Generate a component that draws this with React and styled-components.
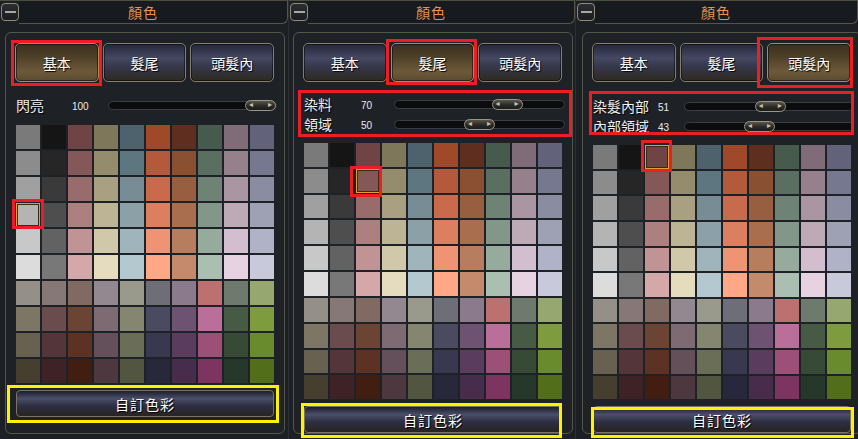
import React from 'react';
import styled, { createGlobalStyle } from 'styled-components';

const GlobalStyle = createGlobalStyle`
  html, body {
    margin: 0;
    padding: 0;
    background: #1b1e23;
  }
  body {
    font-family: "Noto Sans CJK TC", "Noto Sans CJK SC", sans-serif;
    color: #f2f2f2;
  }
`;

const PALETTE = [
  ['#7a7a7a', '#151515', '#6e4444', '#7e775a', '#4d626c', '#a0482a', '#5e2e1e', '#465a4e', '#806c78', '#62637a'],
  ['#8c8c8c', '#262626', '#845858', '#948c6c', '#5e7680', '#b45a3c', '#8a5032', '#5a6e62', '#96808c', '#767890'],
  ['#a0a0a0', '#3a3a3a', '#986c6a', '#a8a080', '#788c96', '#c86a4c', '#985e40', '#6e8276', '#aa96a2', '#8a8ca2'],
  ['#b4b4b4', '#4e4e4e', '#ac807e', '#bcb494', '#8ca0a8', '#dc7e60', '#a86e4e', '#82968a', '#beaab6', '#9ea0b4'],
  ['#c8c8c8', '#626262', '#c09494', '#d0c8a8', '#a0b4bc', '#ee9474', '#b67e5e', '#96aa9e', '#d2bece', '#b0b2c8'],
  ['#dcdcdc', '#787878', '#d4a8a8', '#e4dcbc', '#b4c8d0', '#ffa888', '#c48a6c', '#aabeb2', '#e6d2e0', '#c8cadc'],
  ['#949088', '#867876', '#806a62', '#948890', '#9a9a8c', '#6e6e78', '#8a7a8c', '#bc7070', '#6e7a6e', '#96a870'],
  ['#7e7664', '#6a4c4e', '#6c4434', '#7e6a72', '#848670', '#4a4a60', '#6e5272', '#ba6e9a', '#465a46', '#7e9c3e'],
  ['#686050', '#54363a', '#5c3224', '#645058', '#6a6e56', '#383850', '#5a3c5e', '#9c5078', '#364a36', '#6a8a2e'],
  ['#463e2e', '#3e2226', '#421e12', '#4e3840', '#525640', '#28283c', '#482c4c', '#7e3460', '#26382a', '#526e1a'],
];

const TABS = ['基本', '髮尾', '頭髮內'];

const PANELS = [
  {
    width: 288,
    inset: 5,
    active: 0,
    labelWidth: 56,
    valueWidth: 36,
    slidersTop: 13,
    gridTop: 10,
    sliders: [{ label: '閃亮', value: 100 }],
    selected: [3, 0],
    marks: [
      { x: 11, y: 40, w: 91, h: 46, c: 'red' },
      { x: 12, y: 199, w: 32, h: 30, c: 'red' },
      { x: 7, y: 385, w: 272, h: 38, c: 'yellow' },
    ],
  },
  {
    width: 287,
    inset: 4,
    active: 1,
    labelWidth: 57,
    valueWidth: 33,
    slidersTop: 12,
    gridTop: 9,
    sliders: [
      { label: '染料', value: 70 },
      { label: '領域', value: 50 },
    ],
    selected: [1, 2],
    marks: [
      { x: 97, y: 39, w: 91, h: 46, c: 'red' },
      { x: 9, y: 90, w: 274, h: 47, c: 'red' },
      { x: 61, y: 166, w: 32, h: 31, c: 'red' },
      { x: 12, y: 403, w: 261, h: 35, c: 'yellow' },
    ],
  },
  {
    width: 283,
    inset: 6,
    active: 2,
    labelWidth: 65,
    valueWidth: 26,
    slidersTop: 14,
    gridTop: 9,
    sliders: [
      { label: '染髮內部', value: 51 },
      { label: '內部領域', value: 43 },
    ],
    selected: [0, 2],
    marks: [
      { x: 181, y: 37, w: 96, h: 51, c: 'red' },
      { x: 13, y: 91, w: 265, h: 44, c: 'red' },
      { x: 65, y: 140, w: 31, h: 32, c: 'red' },
      { x: 15, y: 407, w: 263, h: 31, c: 'yellow' },
    ],
  },
];

export default function App() {
  return (
    <>
      <GlobalStyle />
      <Screen>
        {PANELS.map((p, i) => (
          <ColorPanel key={i} {...p} />
        ))}
      </Screen>
    </>
  );
}

function ColorPanel({
  width,
  inset,
  active,
  labelWidth,
  valueWidth,
  slidersTop,
  gridTop,
  sliders,
  selected,
  marks,
}) {
  return (
    <PanelWrap $width={width}>
      <TitleBar>
        <MinusButton>
          <span />
        </MinusButton>
        <TitleArea>顏色</TitleArea>
      </TitleBar>

      <Frame $inset={inset}>
        <TabRow>
          {TABS.map((t, i) => (
            <Tab key={t} $active={i === active}>
              {t}
            </Tab>
          ))}
        </TabRow>

        <Sliders $top={slidersTop}>
          {sliders.map((s) => (
            <SliderRow key={s.label}>
              <SliderLabel $w={labelWidth}>{s.label}</SliderLabel>
              <SliderValue $w={valueWidth}>{s.value}</SliderValue>
              <Track>
                <Thumb style={{ left: `calc((100% - 31px) * ${s.value / 100})` }}>
                  <i>◂</i>
                  <i>▸</i>
                </Thumb>
              </Track>
            </SliderRow>
          ))}
        </Sliders>

        <Swatches $top={gridTop}>
          {PALETTE.map((row, r) =>
            row.map((c, k) => (
              <Swatch
                key={`${r}-${k}`}
                $color={c}
                $picked={selected[0] === r && selected[1] === k}
              />
            ))
          )}
        </Swatches>

        <CustomButton>自訂色彩</CustomButton>
      </Frame>

      {marks.map((m, i) => (
        <Mark
          key={i}
          $color={m.c === 'red' ? '#ee1c24' : '#fff200'}
          style={{ left: m.x, top: m.y, width: m.w, height: m.h }}
        />
      ))}
    </PanelWrap>
  );
}

const Screen = styled.div`
  display: flex;
  width: 858px;
  height: 439px;
  overflow: hidden;
  background: #1b1e23;
`;

const PanelWrap = styled.div`
  position: relative;
  flex: 0 0 ${(p) => p.$width}px;
  width: ${(p) => p.$width}px;
  height: 439px;
  overflow: hidden;
  background: #1c1f24;
  border-left: 1px solid #2c2f33;
  box-sizing: border-box;
  &:first-child {
    border-left: none;
  }
`;

const TitleBar = styled.div`
  display: flex;
  height: 24px;
  border-top: 1px solid #4e4e40;
  box-sizing: border-box;
`;

const MinusButton = styled.div`
  flex: 0 0 18px;
  height: 18px;
  margin: 2px 0 0 1px;
  border: 1px solid #8e8c74;
  border-radius: 4px;
  background: linear-gradient(#2a2d32, #1a1c20);
  display: flex;
  align-items: center;
  justify-content: center;
  box-sizing: border-box;
  span {
    display: block;
    width: 11px;
    height: 2px;
    background: #a8a8a0;
  }
`;

const TitleArea = styled.div`
  flex: 1;
  height: 23px;
  border-bottom: 1px solid #55554a;
  border-right: 1px solid #55554a;
  border-bottom-right-radius: 6px;
  box-sizing: border-box;
  background: #171a1f;
  color: #e39450;
  font-size: 14px;
  line-height: 22px;
  text-align: center;
  padding-right: 20px;
  letter-spacing: 1px;
`;

const Frame = styled.div`
  margin: 8px 0 0 ${(p) => p.$inset}px;
  width: 280px;
  height: 402px;
  box-sizing: border-box;
  border: 1px solid #55564a;
  border-radius: 6px;
  background: #1e2126;
  padding: 10px 9px 0 9px;
  display: flex;
  flex-direction: column;
`;

const TabRow = styled.div`
  display: grid;
  grid-template-columns: repeat(3, 1fr);
  gap: 4px;
  width: 259px;
`;

const Tab = styled.div`
  height: 39px;
  box-sizing: border-box;
  border-radius: 5px;
  border: 1px solid ${(p) => (p.$active ? '#b08a52' : '#857d6e')};
  background: ${(p) =>
    p.$active
      ? 'linear-gradient(#3a2f1f 0%, #4e4028 35%, #6e5a3a 75%, #5a4a30 100%)'
      : 'linear-gradient(#24263a 0%, #444862 38%, #35374a 62%, #2e2920 100%)'};
  box-shadow: inset 0 0 0 1px rgba(0, 0, 0, 0.5);
  display: flex;
  align-items: center;
  justify-content: center;
  font-size: 14px;
  color: #ffffff;
  text-shadow: 1px 1px 1px #000;
`;

const Sliders = styled.div`
  display: flex;
  flex-direction: column;
  margin-top: ${(p) => p.$top}px;
  margin-left: 1px;
`;

const SliderRow = styled.div`
  display: flex;
  align-items: center;
  height: 20px;
`;

const SliderLabel = styled.span`
  flex: 0 0 ${(p) => p.$w}px;
  font-size: 14px;
  white-space: nowrap;
  color: #f0f0f0;
  text-shadow: 1px 1px 1px #000;
`;

const SliderValue = styled.span`
  flex: 0 0 ${(p) => p.$w}px;
  font-family: "Liberation Sans", Arial, sans-serif;
  font-size: 10px;
  color: #eaeaea;
  padding-top: 2px;
`;

const Track = styled.div`
  position: relative;
  flex: 1;
  height: 9px;
  margin-right: -2px;
  border: 1px solid #3c3e42;
  border-radius: 5px;
  background: #0b0c0e;
  box-sizing: border-box;
`;

const Thumb = styled.div`
  position: absolute;
  top: -2px;
  width: 31px;
  height: 11px;
  box-sizing: border-box;
  border: 1px solid #9c9686;
  border-radius: 6px;
  background: linear-gradient(#5a564c, #2a2926 55%, #1c1c1a);
  display: flex;
  align-items: center;
  justify-content: space-between;
  padding: 0 3px;
  i {
    font-style: normal;
    font-size: 8px;
    line-height: 8px;
    color: #c8c0b0;
    font-family: "DejaVu Sans", sans-serif;
  }
`;

const Swatches = styled.div`
  display: grid;
  grid-template-columns: repeat(10, 1fr);
  grid-template-rows: repeat(10, 1fr);
  gap: 2px;
  width: 258px;
  height: 258px;
  margin: ${(p) => p.$top}px 0 0 1px;
`;

const Swatch = styled.div`
  background: ${(p) => p.$color};
  box-sizing: border-box;
  border: ${(p) => (p.$picked ? '1px solid #e0a030' : 'none')};
  box-shadow: ${(p) => (p.$picked ? 'inset 0 0 0 1px #3a2a10' : 'none')};
`;

const CustomButton = styled.div`
  margin: 7px 0 0 1px;
  width: 258px;
  height: 27px;
  box-sizing: border-box;
  border: 1px solid #7a7468;
  border-radius: 4px;
  background: linear-gradient(#1c1d2c 0%, #4a4e68 30%, #2c2e42 60%, #2a2420 100%);
  display: flex;
  align-items: center;
  justify-content: center;
  font-size: 14px;
  color: #ffffff;
  letter-spacing: 1px;
  text-shadow: 1px 1px 1px #000;
`;

const Mark = styled.div`
  position: absolute;
  box-sizing: border-box;
  border: 3px solid ${(p) => p.$color};
  pointer-events: none;
`;
